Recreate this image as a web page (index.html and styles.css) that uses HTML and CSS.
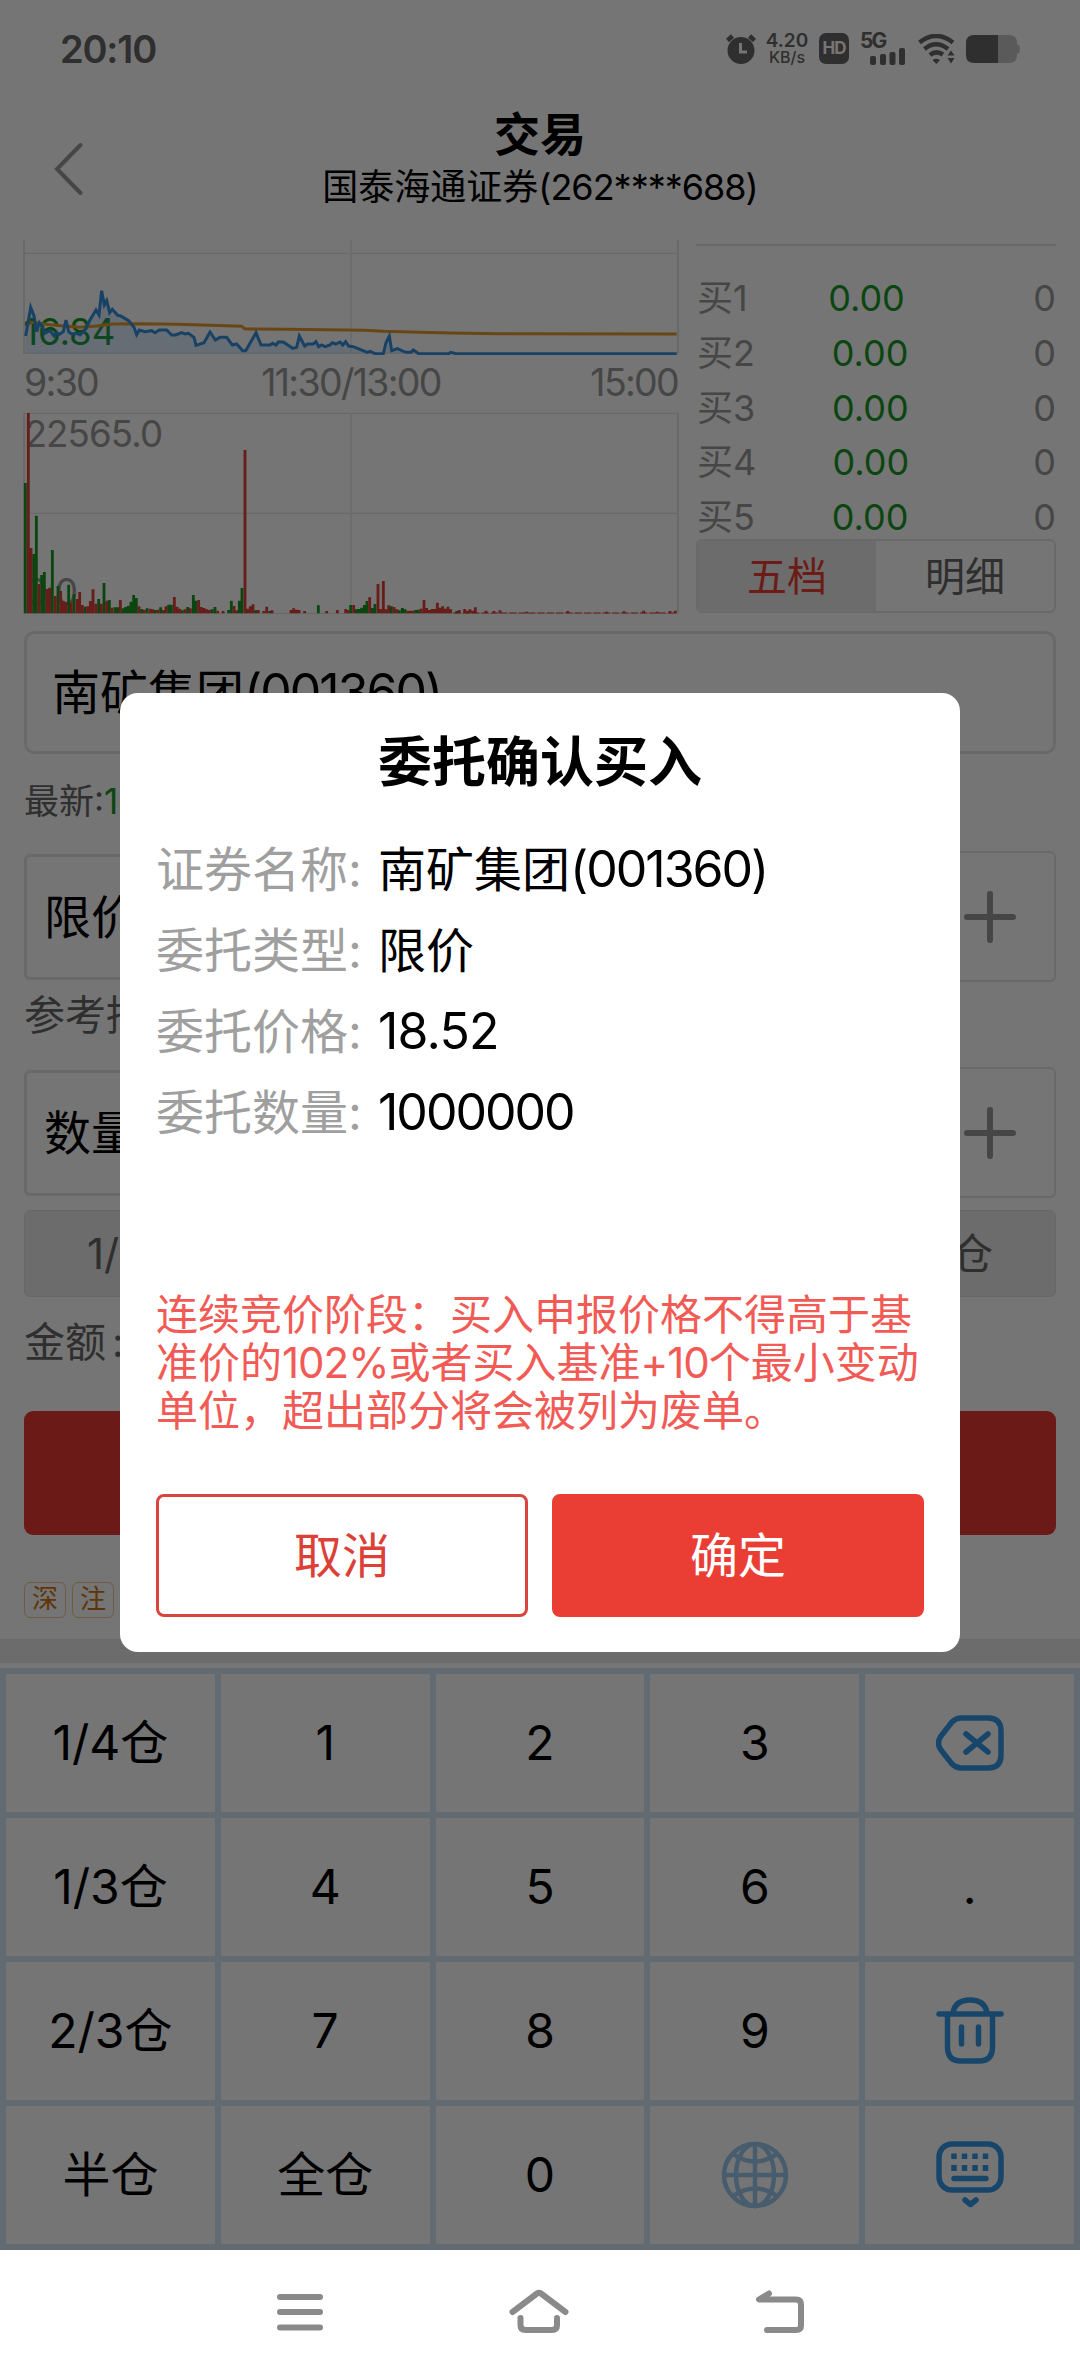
FILE: index.html
```html
<!DOCTYPE html>
<html lang="zh-CN">
<head>
<meta charset="utf-8">
<title>交易</title>
<link rel="stylesheet" href="styles.css">
</head>
<body>
<div class="screen">
  <div class="app">
    <div class="statusbar">
      <span class="clock">20:10</span>
      <div class="status-icons">
        <svg class="i-alarm" width="30" height="30" viewBox="0 0 30 30"><circle cx="15" cy="16.500" r="13.500"/><path class="st" d="M1.500 6.500L6.500 2M28.500 6.500L23.500 2"/><path class="cut" d="M14.500 9V18H21"/></svg>
        <div class="speed"><b>4.20</b><span>KB/s</span></div>
        <span class="hd">HD</span>
        <div class="cell"><b>5G</b><svg width="36" height="17" viewBox="0 0 36 17"><rect y="8" width="6" height="9" rx="2"/><rect x="10" y="6" width="6" height="11" rx="2"/><rect x="19.500" y="4" width="6" height="13" rx="2"/><rect x="29" y="0" width="6" height="17" rx="2"/></svg></div>
        <svg class="i-wifi" width="37" height="30" viewBox="0 0 37 30"><path class="st" d="M1.500 8.500Q18 -4.500 35 8.500M6.500 15Q18 5.500 30 15M12 21Q18 16 25 20.500"/><path d="M14.500 26Q18 23.500 22 26L18.300 30ZM29.500 21.500L33 16.500L36.500 21.500ZM29.500 24L33 29.500L36.500 24Z"/></svg>
        <svg class="i-batt" width="54" height="28" viewBox="0 0 54 28"><path class="rest" d="M32 0H43Q51 0 51 8V9.500H52Q54 10 54 14T52 18.500H51V20Q51 28 43 28H32Z"/><path d="M8 0H32V28H8Q0 28 0 20V8Q0 0 8 0Z"/></svg>
      </div>
    </div>
    <header class="header">
      <svg class="back" width="30" height="54" viewBox="0 0 30 54"><path d="M26.500 3L3 27L26.500 51"/></svg>
      <div class="titles">
        <h1>交易</h1>
        <p>国泰海通证券<span>(262****688)</span></p>
      </div>
    </header>

    <section class="market">
      <div class="charts">
        <svg class="price" width="656" height="115" viewBox="69 30 1968 345">
          <path class="grid" d="M72 70H2034M72 370H2034"/><path class="grid frame" d="M72 30V372M2034 30V372"/><path class="grid faint" d="M1053 30V370"/>
          <text class="low" x="70" y="346" textLength="276">16.84</text>
          <path class="area" d="M77 370V318L92 232L102 258L110 305L118 278L128 290L134 310L150 302L162 318L178 313L190 305L198 270L206 305L215 312L240 315L255 300L270 270L288 240L297 255L305 182L313 225L320 212L329 248L337 238L353 256L362 258L386 272L402 292L410 314L418 300L435 305L465 308L478 300L500 300L515 315L545 308L582 322L588 346L612 338L630 306L646 330L660 322L680 322L697 345L710 342L728 362L737 362L768 308L783 345L850 336L878 355L890 352L898 318L914 348L948 335L956 350L1037 335L1046 348L1060 350L1102 368L1125 370L1150 370L1158 338L1168 318L1175 362L1192 356L1217 367L1240 360L1256 370Z"/>
          <path class="avg" d="M77 290L92 277L150 284L190 288L240 292L290 288L340 282L420 281L530 283L630 286L725 289L735 297L860 298L1095 301L1150 304L1260 307L1350 309L1500 311L2030 312"/>
          <path class="line" d="M77 318L92 232L102 258L110 305L118 278L128 290L134 310L150 302L162 318L170 308L178 313L190 305L198 270L206 305L215 312L230 310L240 315L255 300L270 270L288 240L297 255L305 182L313 225L320 212L329 248L337 238L353 256L362 258L386 272L402 292L410 314L418 300L435 305L455 302L465 308L478 300L500 300L515 315L527 315L545 308L555 312L565 310L582 322L588 346L612 338L630 306L646 330L660 322L680 322L697 345L710 342L728 362L737 362L768 308L783 345L810 345L818 340L828 345L835 336L850 336L878 355L890 352L898 318L914 348L923 342L940 342L948 335L956 350L965 345L975 350L990 345L997 338L1007 342L1020 336L1028 345L1037 335L1046 348L1060 350L1102 367L1110 364L1125 371L1150 371L1158 338L1168 318L1175 362L1192 356L1217 367L1233 367L1240 360L1256 371L1346 371L1352 367L1368 371L2030 371"/>
        </svg>
        <div class="times"><span>9:30</span><span>11:30/13:00</span><span>15:00</span></div>
        <svg class="volume" width="656" height="202" viewBox="69 546 1968 606">
          <path class="grid" d="M72 550H2034M72 850H2034M72 1150H2034"/><path class="grid frame" d="M72 549V1150M2034 549V1150"/><path class="grid faint" d="M1053 550V1150"/>
          <text x="74" y="651" textLength="415">22565.0</text>
          <text x="74" y="1125" textLength="160">0.0</text>
          <path class="vol down" d="M76 1150V759M101 1150V972M109 1150V857M125 1150V1035M133 1150V1026M157 1150V960M174 1150V1068M206 1150V1064M222 1150V1093M255 1150V1130M296 1150V1107M312 1150V1059M328 1150V1110M345 1150V1132M353 1150V1132M369 1150V1135M377 1150V1131M385 1150V1127M393 1150V1115M401 1150V1095M409 1150V1104M425 1150V1137M441 1150V1135M466 1150V1140M482 1150V1132M506 1150V1124M514 1150V1124M547 1150V1141M563 1150V1131M580 1150V1095M588 1150V1112M636 1150V1138M645 1150V1131M686 1150V1140M694 1150V1112M718 1150V1112M726 1150V1074M767 1150V1141M809 1150V1143M955 1150V1126M1052 1150V1125M1069 1150V1138M1077 1150V1137M1085 1150V1133M1093 1150V1125M1101 1150V1113M1117 1150V1134M1125 1150V1122M1174 1150V1129M1198 1150V1141M1207 1150V1134M1215 1150V1138M1247 1150V1140M1255 1150V1139M1370 1150V1143"/>
          <path class="vol up" d="M85 1150V549M93 1150V954M117 1150V1062M141 1150V1077M149 1150V1073M166 1150V1098M182 1150V1083M190 1150V1113M198 1150V1117M214 1150V1118M231 1150V1107M239 1150V1086M247 1150V1125M263 1150V1129M271 1150V1113M279 1150V1078M288 1150V1121M304 1150V1121M320 1150V1112M336 1150V1133M361 1150V1110M417 1150V1129M433 1150V1140M450 1150V1136M458 1150V1138M474 1150V1139M490 1150V1140M498 1150V1129M523 1150V1101M531 1150V1130M539 1150V1136M555 1150V1138M571 1150V1135M596 1150V1110M604 1150V1131M612 1150V1134M620 1150V1138M628 1150V1140M653 1150V1142M669 1150V1143M702 1150V1128M710 1150V1141M735 1150V660M743 1150V1136M751 1150V1129M759 1150V1123M775 1150V1140M791 1150V1143M800 1150V1130M816 1150V1141M873 1150V1140M881 1150V1135M889 1150V1139M897 1150V1140M914 1150V1143M980 1150V1143M1012 1150V1140M1037 1150V1137M1044 1150V1140M1061 1150V1125M1109 1150V1102M1134 1150V1062M1142 1150V1137M1150 1150V1053M1158 1150V1138M1166 1150V1126M1182 1150V1131M1190 1150V1138M1223 1150V1142M1231 1150V1142M1239 1150V1142M1263 1150V1136M1272 1150V1110M1280 1150V1134M1288 1150V1140M1296 1150V1137M1304 1150V1137M1312 1150V1118M1320 1150V1133M1328 1150V1129M1336 1150V1136M1344 1150V1130M1352 1150V1138M1378 1150V1140M1394 1150V1137M1402 1150V1142M1410 1150V1138M1418 1150V1142M1426 1150V1132M1458 1150V1142M1482 1150V1143M1500 1150V1141M1580 1150V1145M1703 1150V1143M1820 1150V1145M1872 1150V1144M1931 1150V1142M1972 1150V1145M2010 1150V1143M2026 1150V1142"/>
          <path class="trace" d="M1360 1149H2032"/>
        </svg>
      </div>
      <div class="book">
        <ul>
          <li><span>买1</span><b>0.00</b><span>0</span></li>
          <li><span>买2</span><b>0.00</b><span>0</span></li>
          <li><span>买3</span><b>0.00</b><span>0</span></li>
          <li><span>买4</span><b>0.00</b><span>0</span></li>
          <li><span>买5</span><b>0.00</b><span>0</span></li>
        </ul>
        <div class="tabs"><span class="on">五档</span><span>明细</span></div>
      </div>
    </section>

    <section class="form">
      <div class="stock">南矿集团<span class="num">(001360)</span></div>
      <p class="latest">最新:<b>16.84</b></p>
      <div class="stepper"><span class="name">限价</span><span class="plus"><svg width="52" height="52" viewBox="0 0 52 52"><path d="M3 26H49M26 3V49"/></svg></span></div>
      <p class="hint">参考持仓</p>
      <div class="stepper"><span class="name">数量</span><span class="plus"><svg width="52" height="52" viewBox="0 0 52 52"><path d="M3 26H49M26 3V49"/></svg></span></div>
      <div class="ratios"><span>1/4仓</span><span>全仓</span></div>
      <p class="amount">金额<span>:</span></p>
      <div class="buy"></div>
      <div class="tags"><span>深</span><span>注</span></div>
    </section>
    <div class="divider"></div>

    <div class="keypad">
      <span>1/4仓</span><span>1</span><span>2</span><span>3</span>
      <span><svg width="68" height="56" viewBox="0 0 68 56"><path d="M25 3H52Q65 3 65 16V40Q65 53 52 53H25Q20 53 16 49L5 35Q0 28 5 21L16 7Q20 3 25 3ZM30 19L52 37M52 19L30 37"/></svg></span>
      <span>1/3仓</span><span>4</span><span>5</span><span>6</span><span>.</span>
      <span>2/3仓</span><span>7</span><span>8</span><span>9</span>
      <span><svg width="68" height="68" viewBox="0 0 68 68"><path d="M3 17H65M17 16Q19 3 34 3T51 16M11.500 17V50Q11.500 64 25 64H43Q56.500 64 56.500 50V17M25.500 30V47M42.500 30V47"/></svg></span>
      <span>半仓</span><span>全仓</span><span>0</span>
      <span><svg class="globe" width="68" height="68" viewBox="0 0 68 68"><circle cx="34" cy="34" r="31"/><ellipse cx="34" cy="34" rx="19" ry="31"/><path d="M34 3V65M3 34H65M12 13Q34 28 56 13M12 55Q34 40 56 55"/></svg></span>
      <span><svg width="68" height="68" viewBox="0 0 68 68"><rect x="3" y="3" width="62" height="46" rx="13"/><path d="M18 37.500H50M29 59L34.500 63.500L40 59"/><path class="dots" d="M18 12.500V18M28.500 12.500V18M39 12.500V18M49.500 12.500V18M18 24V30M28.500 24V30M39 24V30M49.500 24V30"/></svg></span>
    </div>

    <div class="mask">
      <div class="dialog">
        <h2>委托确认买入</h2>
        <dl>
          <dt>证券名称:</dt><dd>南矿集团<span class="num">(001360)</span></dd>
          <dt>委托类型:</dt><dd>限价</dd>
          <dt>委托价格:</dt><dd><span class="num price-num">18.52</span></dd>
          <dt>委托数量:</dt><dd><span class="num">1000000</span></dd>
        </dl>
        <p class="warn">连续竞价阶段：买入申报价格不得高于基<br>准价的<span>102%</span>或者买入基准<span>+10</span>个最小变动<br>单位，超出部分将会被列为废单。</p>
        <div class="actions"><button class="cancel">取消</button><button class="ok">确定</button></div>
      </div>
    </div>
  </div>

  <nav class="navbar">
    <svg width="46" height="37" viewBox="0 0 46 37"><path d="M3 3H43M3 18H43M3 33.500H43"/></svg>
    <svg width="60" height="46" viewBox="0 0 60 46"><path d="M3.500 23L28 4.500Q30 3 32 4.500L56.500 23M11.500 29V36Q11.500 41 16.500 41H43Q48 41 48 36V29"/></svg>
    <svg width="50" height="44" viewBox="0 0 50 44"><path d="M14 3.500L4 9.500H41Q46 9.500 46 14.500V35.500Q46 40 41 40H12"/></svg>
  </nav>
</div>
</body>
</html>
```

FILE: styles.css
```css
* { box-sizing: border-box; margin: 0; padding: 0; }
body { width: 1080px; background: #fff; font-family: Inter, "Noto Sans CJK SC", sans-serif; color: #000; }
svg { display: block; flex: none; }
ul { list-style: none; }
.screen { width: 1080px; height: 2376px; overflow: hidden; }
.app { position: relative; height: 2250px; background: #fff; }

.statusbar { display: flex; justify-content: space-between; height: 97px; padding: 0 60px; align-items: center; color: #666; }
.clock { font-size: 38px; font-weight: 600; letter-spacing: -1.2px; }
.status-icons { display: flex; align-items: center; }
.status-icons svg { fill: #666; }
.status-icons .st { fill: none; stroke: #666; stroke-width: 4.500; }
.status-icons .cut { fill: none; stroke: #fff; stroke-width: 3; }
.status-icons .rest { fill: #c4c4c4; }
.speed { display: flex; flex-direction: column; align-items: center; width: 40px; margin: 0 12px 0 11px; line-height: 16px; font-size: 16px; font-weight: 500; }
.speed b { font-size: 19px; font-weight: 600; }
.hd { width: 30px; height: 31px; border-radius: 7px; background: #666; color: #fff; font-size: 17px; font-weight: 700; line-height: 31px; text-align: center; letter-spacing: -1px; }
.cell { display: flex; flex-direction: column; width: 45px; height: 32px; margin-left: 11px; }
.cell b { height: 15px; line-height: 15px; font-size: 21px; font-weight: 700; letter-spacing: -2px; }
.cell svg { margin-left: 10px; }
.i-wifi { margin: 0 11px 0 13px; }

.header { display: grid; grid-template-columns: 120px 840px 120px; height: 143px; }
.back { margin: 45px 0 0 54px; fill: none; stroke: #999; stroke-width: 4; stroke-linecap: round; }
.titles { text-align: center; padding-top: 9px; }
.titles h1 { font-size: 46px; line-height: 56px; font-weight: 700; }
.titles p { font-size: 36px; line-height: 50px; }
.titles p span { letter-spacing: -1px; }

.market { display: flex; justify-content: space-between; padding: 0 24px 0 23px; height: 374px; }
.grid { fill: none; stroke: #e4e4e4; stroke-width: 4; }
.frame { stroke-width: 6; }
.faint { stroke: #eeeeee; stroke-width: 6; }
.charts text { font-size: 110px; fill: #999; }
.charts .low { fill: #1a9a28; }
.area { fill: #3d9af3; fill-opacity: .17; }
.avg, .line { fill: none; stroke-width: 9; stroke: #e59a30; }
.line { stroke: #3490dc; }
.vol { fill: none; stroke-width: 8.500; }
.down { stroke: #1a9623; }
.up { stroke: #e0403a; }
.trace { fill: none; stroke: #e0403a; stroke-width: 3; stroke-dasharray: 22 6; }
.times { display: grid; grid-template-columns: 1fr auto 1fr; height: 57px; padding: 0 1px 0 1px; line-height: 56px; font-size: 37.500px; color: #999; letter-spacing: -1.7px; }
.times span:last-child { text-align: right; }
.book { width: 360px; padding-top: 4px; }
.book ul { display: flex; flex-direction: column; gap: 10.800px; padding: 30px 0 0 1px; border-top: 2px solid #e4e4e4; }
.book li { display: flex; justify-content: space-between; height: 44px; line-height: 44px; font-size: 36px; color: #999; }
.book b { margin-right: 48px; font-weight: 400; color: #1a9a28; }
.tabs { display: grid; grid-template-columns: 1fr 1fr; height: 74px; border: 2px solid #e4e4e4; border-radius: 6px; line-height: 71px; font-size: 40px; text-align: center; color: #666; }
.tabs .on { background: #ebebeb; color: #e93d33; }

.form { padding: 17px 24px 0; height: 1025px; color: #000; }
.stock { height: 123px; border: 3px solid #e4e4e4; border-radius: 10px; padding-left: 25px; line-height: 117px; font-size: 48px; }
.form p { line-height: 50px; color: #666; }
.latest { margin: 22px 0 25px; font-size: 35px; }
.latest b { font-weight: 400; color: #1a9a28; }
.stepper { display: flex; align-items: center; justify-content: space-between; height: 131px; }
.name { width: 500px; height: 126px; border: 3px solid #e4e4e4; border-radius: 6px; padding-left: 17px; line-height: 120px; font-size: 47px; }
.plus { display: flex; align-items: center; width: 132px; height: 131px; border: 2px solid #e4e4e4; border-left: 0; border-radius: 0 6px 6px 0; padding-left: 40px; }
.plus svg { fill: none; stroke: #999; stroke-width: 6; stroke-linecap: round; }
.hint { margin: 8px 0 27px; font-size: 41px; }
.ratios { display: flex; justify-content: space-between; margin-top: 12px; height: 87px; padding: 0 62px; border: 1px solid #e0e0e0; border-radius: 6px; background: #ebebeb; line-height: 85px; font-size: 42px; color: #666; }
.amount { margin: 20px 0 44px; font-size: 41px; }
.amount span { margin-left: 6px; }
.buy { height: 124px; border-radius: 9px; background: #e93a32; }
.tags { display: flex; gap: 6px; margin-top: 47px; }
.tags span { width: 42px; height: 36px; border: 1.500px solid #f7c48f; border-radius: 6px; line-height: 32px; font-size: 26px; text-align: center; color: #cc7414; }
.divider { height: 24px; margin-bottom: 5px; background: #ebebeb; }

.keypad { display: grid; grid-template-columns: repeat(5, 1fr); grid-auto-rows: 138px; gap: 6px; padding: 6px; height: 582px; background: #d6e8f8; }
.keypad span { display: flex; align-items: center; justify-content: center; background: #fff; font-size: 48px; line-height: 48px; }
.keypad svg { fill: none; stroke: #359ae8; stroke-width: 5.500; stroke-linecap: round; stroke-linejoin: round; }
.keypad .globe { stroke: #9cc8ee; stroke-width: 4.500; }
.keypad .dots { stroke-linecap: butt; }

.mask { position: absolute; inset: 0; background: rgba(0, 0, 0, .54); }
.dialog { width: 840px; height: 959px; margin: 693px 120px 0; padding: 36px; border-radius: 18px; background: #fff; }
.dialog h2 { line-height: 68px; font-size: 54px; font-weight: 700; text-align: center; }
.dialog dl { display: grid; grid-template-columns: 222px 1fr; grid-auto-rows: 81px; margin-top: 32px; line-height: 81px; font-size: 48px; }
.dialog dt { color: #9f9f9f; }
.num { font-size: 50px; letter-spacing: -2px; }
.price-num { letter-spacing: -0.800px; }
.warn { height: 144px; margin-top: 138px; line-height: 48px; font-size: 42px; color: #f25a55; white-space: nowrap; }
.warn span { letter-spacing: -1px; }
.actions { display: grid; grid-template-columns: 1fr 1fr; gap: 24px; height: 123px; margin-top: 59px; }
.actions button { border: 3px solid #d9453c; border-radius: 8px; background: #fff; color: #dc4036; font: inherit; font-size: 48px; line-height: 110px; }
.actions .ok { border-color: #ea3e34; background: #ea3e34; color: #fff; }

.navbar { display: flex; align-items: center; justify-content: space-between; height: 126px; padding: 0 275px 2px 277px; background: #fff; }
.navbar svg { fill: none; stroke: #8a8a8a; stroke-width: 6; stroke-linecap: round; stroke-linejoin: round; }
```
